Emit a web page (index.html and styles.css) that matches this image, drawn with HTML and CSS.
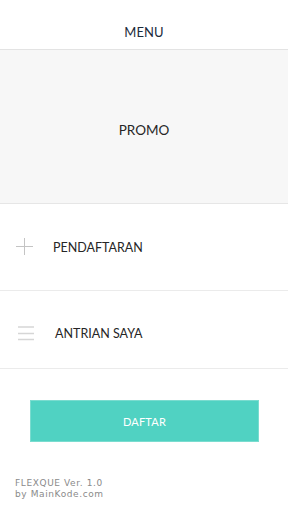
FILE: index.html
```
<!DOCTYPE html>
<html>
<head>
<meta charset="utf-8">
<link rel="stylesheet" href="styles.css">
</head>
<body>
<div class="app">
  <header class="header">MENU</header>
  <section class="promo">PROMO</section>
  <div class="row row-daftar">
    <svg class="icon" width="17" height="17" viewBox="0 0 17 17"><path d="M8.5 0V17M0 8.5H17" stroke="#c4c4c4" stroke-width="1" fill="none"/></svg>
    <span class="label">PENDAFTARAN</span>
  </div>
  <div class="row row-antrian">
    <svg class="icon icon-menu" width="16" height="15" viewBox="0 0 16 15"><path d="M0 1H16M0 7.5H16M0 13.5H16" stroke="#d6d6d6" stroke-width="1.4" fill="none"/></svg>
    <span class="label">ANTRIAN SAYA</span>
  </div>
  <div class="action">
    <button class="btn">DAFTAR</button>
  </div>
  <footer class="footer">
    <div>FLEXQUE Ver. 1.0</div>
    <div>by MainKode.com</div>
  </footer>
</div>
</body>
</html>
```
FILE: styles.css
```
* { box-sizing: border-box; }
html, body { margin: 0; padding: 0; background: #fff; }
body { font-family: Lato, "Open Sans", sans-serif; font-weight: 400; color: #262626; }
.app { width: 288px; height: 512px; display: flex; flex-direction: column; }
.header {
  height: 50px;
  border-bottom: 1px solid #e3e3e3;
  display: flex; align-items: center; justify-content: center;
  padding-top: 14px;
  font-size: 13px; color: #1c2b3b; letter-spacing: 0.1px;
}
.promo {
  height: 154px;
  background: #f7f7f7;
  border-bottom: 1px solid #e6e6e6;
  display: flex; align-items: center; justify-content: center;
  padding-top: 6px;
  font-size: 13.5px; letter-spacing: 0;
}
.row {
  display: flex; align-items: center;
  border-bottom: 1px solid #ebebeb;
  font-size: 12.5px; letter-spacing: 0;
}
.row-daftar { height: 87px; padding-left: 16px; padding-top: 1px; }
.row-daftar .icon { margin-top: -3px; }
.row-daftar .label { margin-left: 20px; }
.row-antrian { height: 78px; padding-left: 18px; padding-top: 7px; }
.row-antrian .label { margin-left: 21px; }
.action { padding: 31px 29px 0 30px; }
.btn {
  width: 229px; height: 42px;
  background: #50d2c2;
  border: 1px solid #7adccf;
  color: #fff;
  font-family: Lato, sans-serif; font-weight: 400;
  font-size: 11px; letter-spacing: 0.2px;
  display: flex; align-items: center; justify-content: center;
  padding: 0;
}
.footer {
  padding: 36px 0 0 15px;
  font-family: "DejaVu Sans", sans-serif; font-weight: 400;
  font-size: 9px; line-height: 11px;
  color: #8a8a8a; letter-spacing: 0.6px;
}
```
